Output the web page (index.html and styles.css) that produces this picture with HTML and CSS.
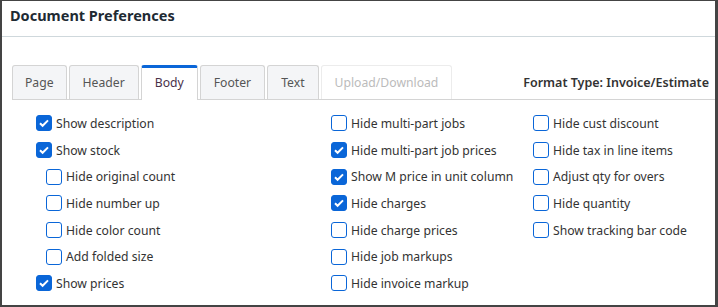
FILE: index.html
```html
<!DOCTYPE html>
<html lang="en">
<head>
  <meta charset="UTF-8">
  <meta name="viewport" content="width=device-width, initial-scale=1.0">
  <title>Document Preferences</title>
  <link rel="stylesheet" href="styles.css">
</head>
<body>
  <div class="frame">
    <h1 class="title">Document Preferences</h1>

    <div class="tabbar">
      <ul class="tabs">
        <li class="tab">Page</li>
        <li class="tab">Header</li>
        <li class="tab active">Body</li>
        <li class="tab">Footer</li>
        <li class="tab">Text</li>
        <li class="tab disabled">Upload/Download</li>
      </ul>
      <div class="format-type">Format Type: Invoice/Estimate</div>
    </div>

    <div class="options">
      <div class="col col-1">
        <label class="opt"><input type="checkbox" checked> Show description</label>
        <label class="opt"><input type="checkbox" checked> Show stock</label>
        <label class="opt sub"><input type="checkbox"> Hide original count</label>
        <label class="opt sub"><input type="checkbox"> Hide number up</label>
        <label class="opt sub"><input type="checkbox"> Hide color count</label>
        <label class="opt sub"><input type="checkbox"> Add folded size</label>
        <label class="opt"><input type="checkbox" checked> Show prices</label>
      </div>
      <div class="col col-2">
        <label class="opt"><input type="checkbox"> Hide multi-part jobs</label>
        <label class="opt"><input type="checkbox" checked> Hide multi-part job prices</label>
        <label class="opt"><input type="checkbox" checked> Show M price in unit column</label>
        <label class="opt"><input type="checkbox" checked> Hide charges</label>
        <label class="opt"><input type="checkbox"> Hide charge prices</label>
        <label class="opt"><input type="checkbox"> Hide job markups</label>
        <label class="opt"><input type="checkbox"> Hide invoice markup</label>
      </div>
      <div class="col col-3">
        <label class="opt"><input type="checkbox"> Hide cust discount</label>
        <label class="opt"><input type="checkbox"> Hide tax in line items</label>
        <label class="opt"><input type="checkbox"> Adjust qty for overs</label>
        <label class="opt"><input type="checkbox"> Hide quantity</label>
        <label class="opt"><input type="checkbox"> Show tracking bar code</label>
      </div>
    </div>
  </div>
</body>
</html>
```

FILE: styles.css
```css
body {
  margin: 0;
  font-family: "Noto Sans", "Open Sans", sans-serif;
  font-size: 12.2px;
  color: #333;
  background: #fff;
}
.frame {
  height: 307px;
  box-sizing: border-box;
  border-top: 1px solid #444;
  border-left: 2px solid #444;
  border-right: 3px solid #444;
  border-bottom: 2px solid #444;
}
.title {
  margin: 0;
  height: 36px;
  padding: 4px 0 0 8px;
  box-sizing: border-box;
  font-size: 14.5px;
  font-weight: bold;
  color: #1e2a33;
  border-bottom: 1px solid #cfd8dc;
}
.tabbar {
  display: flex;
  align-items: flex-end;
  justify-content: space-between;
  margin: 28px 0 0 10px;
  border-bottom: 1px solid #d4d4d4;
}
.tabs {
  display: flex;
  gap: 2px;
  margin: 0;
  padding: 0;
  list-style: none;
}
.tab {
  height: 34px;
  line-height: 34px;
  padding: 0 13px;
  box-sizing: border-box;
  background: #f4f5f7;
  border: 1px solid #d4d4d4;
  border-bottom: none;
  border-radius: 3px 3px 0 0;
  color: #555;
}
.tab:first-child {
  padding: 0 12px;
}
.tab.active {
  background: #fff;
  border-top: 3px solid #0a66d8;
  line-height: 30px;
  color: #4a3048;
  margin-bottom: -1px;
  height: 35px;
}
.tab.disabled {
  background: #fff;
  border-color: #ececec;
  color: #bbb;
}
.format-type {
  font-weight: 600;
  font-size: 12.5px;
  color: #333;
  padding: 0 6px 8px 0;
}
.options {
  display: flex;
  padding-top: 10px;
}
.col {
  display: flex;
  flex-direction: column;
}
.col-1 {
  padding-left: 34px;
  width: 295px;
}
.col-2 {
  width: 202px;
}
.opt {
  display: flex;
  align-items: center;
  gap: 4px;
  height: 26.7px;
  white-space: nowrap;
}
.opt.sub {
  padding-left: 10px;
}
.opt input {
  appearance: none;
  -webkit-appearance: none;
  margin: 0;
  width: 16px;
  height: 16px;
  border: 1px solid #0a66d8;
  border-radius: 3px;
  background: #fff;
  flex-shrink: 0;
}
.opt input:checked {
  background: #0a66d8 url("data:image/svg+xml,%3Csvg xmlns='http://www.w3.org/2000/svg' viewBox='0 0 16 16'%3E%3Cpath d='M4 8.2l2.6 2.6L12 5.4' fill='none' stroke='%23fff' stroke-width='2'/%3E%3C/svg%3E") center/16px no-repeat;
}
```
